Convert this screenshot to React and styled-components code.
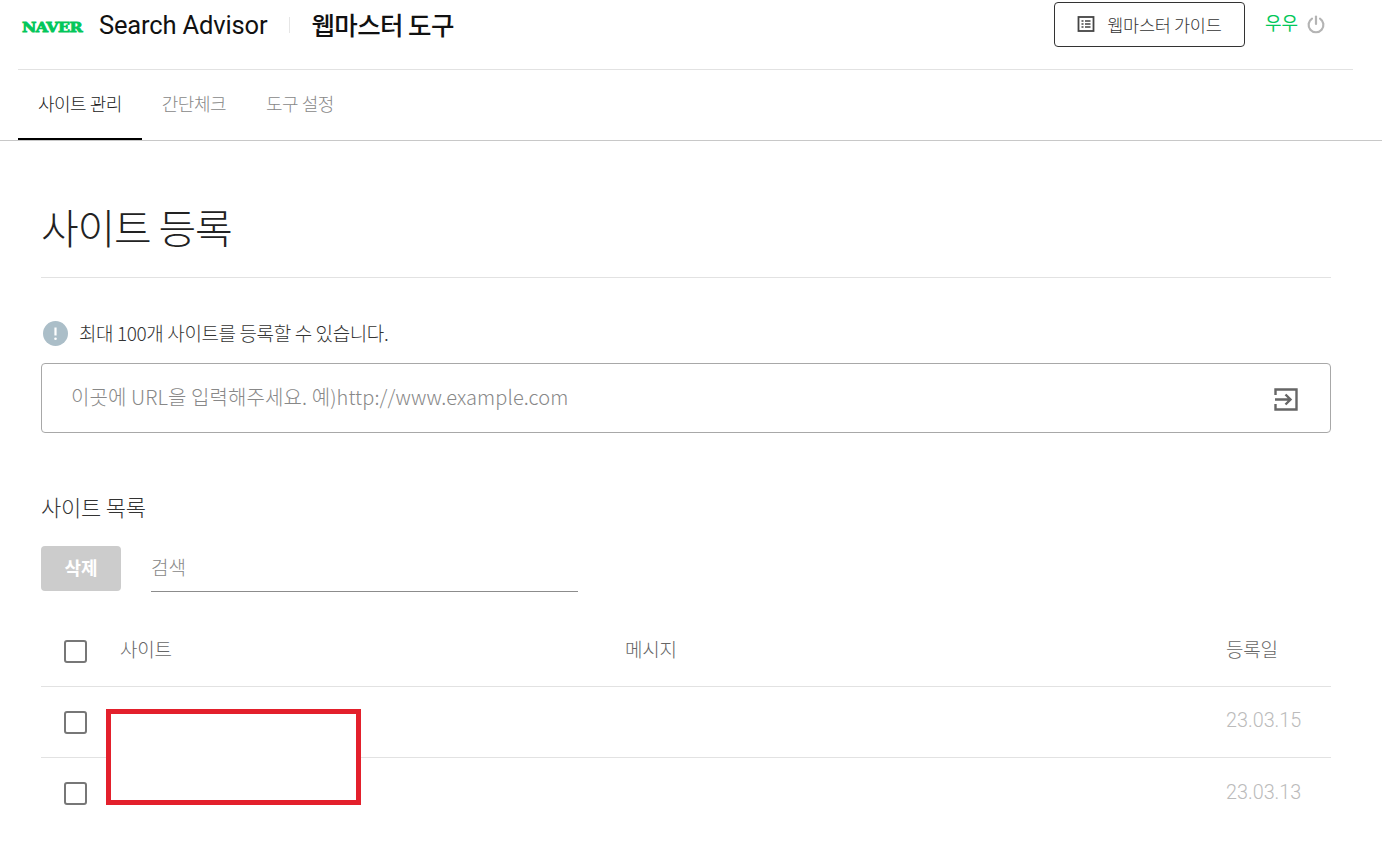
import React from 'react';
import styled, { createGlobalStyle } from 'styled-components';

const KR = `"Noto Sans CJK KR", "Noto Sans", sans-serif`;

const GlobalStyle = createGlobalStyle`
  html, body {
    margin: 0;
    padding: 0;
    background: #fff;
    font-family: ${KR};
    overflow: hidden;
  }
  * { box-sizing: border-box; }
`;

const Page = styled.div`
  position: relative;
  width: 1382px;
  height: 852px;
  overflow: hidden;
`;

const Header = styled.header`
  display: flex;
  align-items: flex-start;
  justify-content: space-between;
  height: 70px;
  margin: 0 29px 0 18px;
  border-bottom: 1px solid #e2e2e2;
`;

const Brand = styled.div`
  display: flex;
  align-items: center;
  height: 50px;
  padding-left: 4px;
`;

const NaverLogo = styled.span`
  display: inline-block;
  width: 77px;
  margin-top: 4px;
  font-family: "DejaVu Serif", serif;
  font-weight: 700;
  font-size: 13.5px;
  letter-spacing: -0.5px;
  color: #03c75a;
  -webkit-text-stroke: 0.8px #03c75a;
  transform: scaleX(1.17);
  transform-origin: left center;
`;

const ServiceName = styled.span`
  font-family: Roboto, sans-serif;
  font-size: 25.5px;
  color: #111;
  letter-spacing: -0.15px;
`;

const BrandDivider = styled.span`
  width: 1px;
  height: 16px;
  background: #e6e6e6;
  margin: 0 21px 0 22px;
`;

const ToolName = styled.span`
  font-size: 25.5px;
  font-weight: 500;
  letter-spacing: -0.6px;
  color: #111;
  margin-top: -3px;
`;

const HeaderRight = styled.div`
  display: flex;
  align-items: flex-start;
  padding-top: 2px;
`;

const GuideButton = styled.button`
  display: flex;
  align-items: center;
  justify-content: center;
  gap: 12px;
  width: 191px;
  height: 45px;
  padding-bottom: 2px;
  background: #fff;
  border: 1px solid #333;
  border-radius: 4px;
  font-family: ${KR};
  font-size: 17.5px;
  font-weight: 300;
  color: #333;
  letter-spacing: -0.3px;
`;

const UserBox = styled.div`
  display: flex;
  align-items: center;
  gap: 8px;
  height: 42px;
  margin: 0 27px 0 20px;
`;

const UserName = styled.span`
  font-size: 18px;
  color: #03c75a;
  margin-top: -3px;
`;

const PowerSvg = styled.svg`
  margin-top: 2px;
`;

const Tabs = styled.nav`
  display: flex;
  height: 71px;
  padding-left: 18px;
  border-bottom: 1px solid #c8c8c8;
`;

const Tab = styled.a`
  display: flex;
  align-items: center;
  height: 70px;
  padding: 0 20px 2px;
  font-size: 18px;
  font-weight: 300;
  letter-spacing: -0.5px;
  color: ${(p) => (p.$active ? '#222' : '#888')};
  border-bottom: ${(p) => (p.$active ? '2px solid #000' : '2px solid transparent')};
`;

const Main = styled.main`
  padding: 0 51px 0 41px;
`;

const Title = styled.h1`
  display: flex;
  align-items: center;
  height: 137px;
  margin: 0;
  padding-top: 34px;
  font-size: 41px;
  font-weight: 300;
  letter-spacing: -1.2px;
  color: #222;
  border-bottom: 1px solid #e2e2e2;
`;

const Notice = styled.div`
  display: flex;
  align-items: center;
  gap: 11px;
  height: 26px;
  margin: 42px 0 17px 2px;
`;

const NoticeText = styled.p`
  margin: -2px 0 0;
  font-size: 19px;
  font-weight: 300;
  letter-spacing: -0.38px;
  color: #333;
`;

const UrlBox = styled.div`
  display: flex;
  align-items: center;
  justify-content: space-between;
  height: 70px;
  padding: 0 32px 0 29px;
  border: 1px solid #a8a8a8;
  border-radius: 4px;
`;

const Placeholder = styled.span`
  font-size: 20px;
  font-weight: 300;
  color: #888;
  letter-spacing: 0.1px;
  margin-top: -4px;
`;

const SubmitSvg = styled.svg`
  margin-top: 2px;
`;

const SectionTitle = styled.h2`
  display: flex;
  align-items: center;
  height: 30px;
  margin: 58px 0 25px;
  font-size: 22px;
  font-weight: 300;
  letter-spacing: -0.2px;
  color: #333;
`;

const Toolbar = styled.div`
  display: flex;
  align-items: stretch;
  gap: 30px;
  height: 46px;
`;

const DeleteButton = styled.button`
  width: 80px;
  height: 45px;
  padding-bottom: 4px;
  background: #ccc;
  border: 0;
  border-radius: 4px;
  font-family: ${KR};
  font-size: 18px;
  font-weight: 700;
  color: #fff;
`;

const SearchField = styled.div`
  display: flex;
  align-items: center;
  width: 427px;
  padding-bottom: 5px;
  font-size: 19px;
  font-weight: 300;
  color: #888;
  border-bottom: 1px solid #8c8c8c;
`;

const Row = styled.div`
  display: grid;
  grid-template-columns: 79px 505px 1fr 105px;
  align-items: center;
  height: ${(p) => (p.$head ? '95px' : '71px')};
  padding-top: ${(p) => (p.$head ? '24px' : '0')};
  border-bottom: 1px solid #e2e2e2;
  &:last-child { border-bottom: 0; }
`;

const Check = styled.span`
  display: block;
  width: 23px;
  height: 23px;
  margin-left: 23px;
  border: 2px solid #777;
  border-radius: 3px;
`;

const HeadCell = styled.span`
  font-size: 19px;
  font-weight: 300;
  color: #666;
  letter-spacing: -0.2px;
  margin-top: -5px;
`;

const DateCell = styled.span`
  font-family: Roboto, sans-serif;
  font-size: 19.8px;
  font-weight: 300;
  color: #bbb;
  margin-top: -3px;
`;

// 원본 캡처에 표시된 가림 박스
const RedactBox = styled.div`
  position: absolute;
  left: 106px;
  top: 709px;
  width: 255px;
  height: 96px;
  background: #fff;
  border: 5px solid #e3202c;
`;

const GuideIcon = () => (
  <svg width="18" height="18" viewBox="0 0 18 18" fill="none" stroke="#444">
    <rect x="1.5" y="2" width="15" height="14" strokeWidth="1.8" />
    <path d="M4.5 6h2M8 6h5.5M4.5 9h2M8 9h5.5M4.5 12h2M8 12h5.5" strokeWidth="1.4" />
  </svg>
);

const PowerIcon = () => (
  <PowerSvg width="20" height="20" viewBox="0 0 20 20" fill="none" stroke="#b4b4b4" strokeWidth="2.2" strokeLinecap="round">
    <path d="M6 4.6a7.4 7.4 0 1 0 8 0" />
    <path d="M10 2.5v7.5" />
  </PowerSvg>
);

const InfoIcon = () => (
  <svg width="25" height="25" viewBox="0 0 25 25">
    <circle cx="12.5" cy="12.5" r="12.5" fill="#abbec8" />
    <path d="M12.5 6.5v8" stroke="#fff" strokeWidth="2.2" />
    <circle cx="12.5" cy="17.8" r="1.3" fill="#fff" />
  </svg>
);

const SubmitIcon = () => (
  <SubmitSvg width="24" height="24" viewBox="0 0 24 24" fill="none" stroke="#666" strokeWidth="2.4">
    <path d="M1.5 8V2.5h21v20h-21V17" />
    <path d="M1 12.5h15M11.5 7.5l5 5-5 5" />
  </SubmitSvg>
);

const App = () => (
  <Page>
    <GlobalStyle />
    <Header>
      <Brand>
        <NaverLogo>NAVER</NaverLogo>
        <ServiceName>Search Advisor</ServiceName>
        <BrandDivider />
        <ToolName>웹마스터 도구</ToolName>
      </Brand>
      <HeaderRight>
        <GuideButton>
          <GuideIcon />
          웹마스터 가이드
        </GuideButton>
        <UserBox>
          <UserName>우우</UserName>
          <PowerIcon />
        </UserBox>
      </HeaderRight>
    </Header>
    <Tabs>
      <Tab $active>사이트 관리</Tab>
      <Tab>간단체크</Tab>
      <Tab>도구 설정</Tab>
    </Tabs>
    <Main>
      <Title>사이트 등록</Title>
      <Notice>
        <InfoIcon />
        <NoticeText>최대 100개 사이트를 등록할 수 있습니다.</NoticeText>
      </Notice>
      <UrlBox>
        <Placeholder>이곳에 URL을 입력해주세요. 예)http://www.example.com</Placeholder>
        <SubmitIcon />
      </UrlBox>
      <SectionTitle>사이트 목록</SectionTitle>
      <Toolbar>
        <DeleteButton>삭제</DeleteButton>
        <SearchField>검색</SearchField>
      </Toolbar>
      <Row $head>
        <Check />
        <HeadCell>사이트</HeadCell>
        <HeadCell>메시지</HeadCell>
        <HeadCell>등록일</HeadCell>
      </Row>
      <Row>
        <Check />
        <span />
        <span />
        <DateCell>23.03.15</DateCell>
      </Row>
      <Row>
        <Check />
        <span />
        <span />
        <DateCell>23.03.13</DateCell>
      </Row>
    </Main>
    <RedactBox />
  </Page>
);

export default App;
